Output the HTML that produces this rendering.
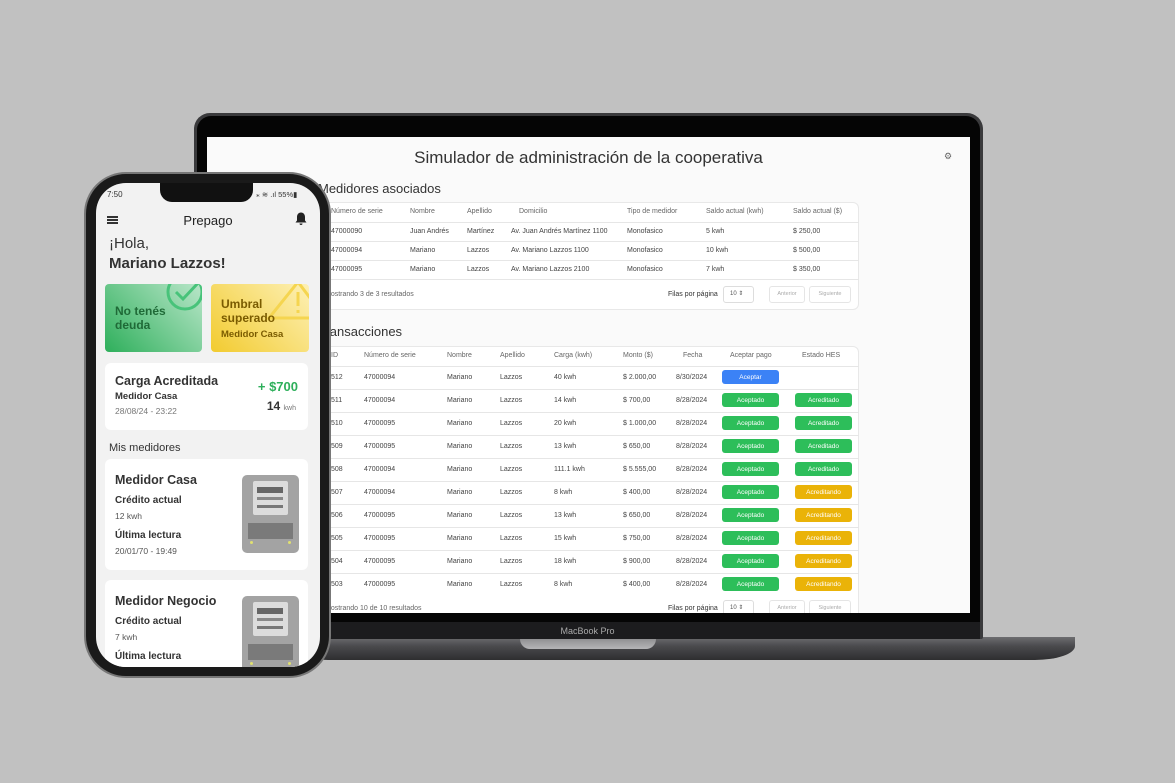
<!DOCTYPE html>
<html><head><meta charset="utf-8"><style>
*{margin:0;padding:0;box-sizing:border-box}
body{width:1175px;height:783px;background:#c1c1c1;position:relative;overflow:hidden;font-family:"Liberation Sans",sans-serif;color:#333}
.a{position:absolute}
.t{position:absolute;white-space:nowrap}
.sm{font-size:7px;color:#444}
.hd{font-size:7px;color:#666}
.btn{position:absolute;height:14px;border-radius:3px;font-size:6.5px;color:#fff;display:flex;align-items:center;justify-content:center}
.g{background:#2dbe5a}.y{background:#eab308}.b{background:#3b82f6}
.line{position:absolute;height:1px;background:#e6e6e6}
.card{position:absolute;background:#fff;border-radius:6px}
</style></head><body>
<div class="a" style="left:288px;top:637px;width:787px;height:23px;border-radius:0 0 40px 40px/0 0 14px 14px;background:linear-gradient(#6d6d70,#4a4a4d 40%,#2e2e30)"></div>
<div class="a" style="left:520px;top:637px;width:136px;height:12px;border-radius:0 0 10px 10px;background:linear-gradient(#8a8a8c,#b5b5b7)"></div>
<div class="a" style="left:194px;top:113px;width:789px;height:526px;border-radius:16px 16px 2px 2px;background:#3a3a3c"></div>
<div class="a" style="left:197px;top:116px;width:783px;height:521px;border-radius:14px 14px 0 0;background:#050505"></div>
<div class="a" style="left:197px;top:622px;width:783px;height:17px;background:#1c1c1e"></div>
<div class="t" style="left:0;width:1175px;text-align:center;top:626px;font-size:9px;color:#aaa">MacBook Pro</div>
<div class="a" style="left:207px;top:137px;width:763px;height:476px;background:#fafafa;overflow:hidden">
 <div class="t" style="left:0;width:763px;text-align:center;top:11px;font-size:17px;color:#333">Simulador de administración de la cooperativa</div>
 <div class="t" style="left:737px;top:14px;font-size:9px;color:#666">⚙</div>
 <div class="t" style="left:111px;top:44px;font-size:13px;color:#333">Medidores asociados</div>
 <div class="card" style="left:115px;top:65px;width:537px;height:108px;border:1px solid #e8e8e8"></div>
 <div class="line" style="left:115px;top:85px;width:537px"></div>
 <div class="line" style="left:115px;top:104px;width:537px"></div>
 <div class="line" style="left:115px;top:123px;width:537px"></div>
 <div class="line" style="left:115px;top:142px;width:537px"></div>
</div>
<div class="a" style="left:207px;top:137px;width:763px;height:476px;overflow:hidden">
 <div class="t hd" style="left:124px;top:71px">Número de serie</div><div class="t hd" style="left:203px;top:71px">Nombre</div><div class="t hd" style="left:260px;top:71px">Apellido</div><div class="t hd" style="left:312px;top:71px">Domicilio</div><div class="t hd" style="left:420px;top:71px">Tipo de medidor</div><div class="t hd" style="left:499px;top:71px">Saldo actual (kwh)</div><div class="t hd" style="left:586px;top:71px">Saldo actual ($)</div>
 <div class="t sm" style="left:124px;top:91px">47000090</div><div class="t sm" style="left:203px;top:91px">Juan Andrés</div><div class="t sm" style="left:260px;top:91px">Martínez</div><div class="t sm" style="left:304px;top:91px">Av. Juan Andrés Martínez 1100</div><div class="t sm" style="left:420px;top:91px">Monofasico</div><div class="t sm" style="left:499px;top:91px">5 kwh</div><div class="t sm" style="left:586px;top:91px">$ 250,00</div>
 <div class="t sm" style="left:124px;top:110px">47000094</div><div class="t sm" style="left:203px;top:110px">Mariano</div><div class="t sm" style="left:260px;top:110px">Lazzos</div><div class="t sm" style="left:304px;top:110px">Av. Mariano Lazzos 1100</div><div class="t sm" style="left:420px;top:110px">Monofasico</div><div class="t sm" style="left:499px;top:110px">10 kwh</div><div class="t sm" style="left:586px;top:110px">$ 500,00</div>
 <div class="t sm" style="left:124px;top:129px">47000095</div><div class="t sm" style="left:203px;top:129px">Mariano</div><div class="t sm" style="left:260px;top:129px">Lazzos</div><div class="t sm" style="left:304px;top:129px">Av. Mariano Lazzos 2100</div><div class="t sm" style="left:420px;top:129px">Monofasico</div><div class="t sm" style="left:499px;top:129px">7 kwh</div><div class="t sm" style="left:586px;top:129px">$ 350,00</div>
 <div class="t sm" style="left:118px;top:154px;color:#666">Mostrando 3 de 3 resultados</div>
 <div class="t sm" style="left:461px;top:154px;color:#333">Filas por página</div>
 <div class="a" style="left:516px;top:149px;width:31px;height:17px;border:1px solid #ddd;border-radius:3px;font-size:6px;line-height:15px;padding-left:6px;color:#555">10 ⇕</div>
 <div class="a" style="left:562px;top:149px;width:36px;height:17px;border:1px solid #e5e5e5;border-radius:3px;font-size:5.5px;line-height:15px;text-align:center;color:#aaa">Anterior</div>
 <div class="a" style="left:602px;top:149px;width:42px;height:17px;border:1px solid #e5e5e5;border-radius:3px;font-size:5.5px;line-height:15px;text-align:center;color:#aaa">Siguiente</div>
 <div class="t" style="left:111px;top:187px;font-size:13px;color:#333">Transacciones</div>
 <div class="card" style="left:115px;top:209px;width:537px;height:290px;border:1px solid #e8e8e8"></div>
 <div class="t hd" style="left:124px;top:215px">ID</div><div class="t hd" style="left:157px;top:215px">Número de serie</div><div class="t hd" style="left:240px;top:215px">Nombre</div><div class="t hd" style="left:293px;top:215px">Apellido</div><div class="t hd" style="left:347px;top:215px">Carga (kwh)</div><div class="t hd" style="left:416px;top:215px">Monto ($)</div><div class="t hd" style="left:476px;top:215px">Fecha</div><div class="t hd" style="left:523px;top:215px">Aceptar pago</div><div class="t hd" style="left:595px;top:215px">Estado HES</div>
 <div id="rows"></div>
 <div class="t sm" style="left:118px;top:468px;color:#666">Mostrando 10 de 10 resultados</div>
 <div class="t sm" style="left:461px;top:468px;color:#333">Filas por página</div>
 <div class="a" style="left:516px;top:463px;width:31px;height:17px;border:1px solid #ddd;border-radius:3px;font-size:6px;line-height:15px;padding-left:6px;color:#555">10 ⇕</div>
 <div class="a" style="left:562px;top:463px;width:36px;height:17px;border:1px solid #e5e5e5;border-radius:3px;font-size:5.5px;line-height:15px;text-align:center;color:#aaa">Anterior</div>
 <div class="a" style="left:602px;top:463px;width:42px;height:17px;border:1px solid #e5e5e5;border-radius:3px;font-size:5.5px;line-height:15px;text-align:center;color:#aaa">Siguiente</div>
</div>
<script>
var d=[["512","47000094","40 kwh","$ 2.000,00","8/30/2024",0,""],["511","47000094","14 kwh","$ 700,00","8/28/2024",1,"g"],["510","47000095","20 kwh","$ 1.000,00","8/28/2024",1,"g"],["509","47000095","13 kwh","$ 650,00","8/28/2024",1,"g"],["508","47000094","111.1 kwh","$ 5.555,00","8/28/2024",1,"g"],["507","47000094","8 kwh","$ 400,00","8/28/2024",1,"y"],["506","47000095","13 kwh","$ 650,00","8/28/2024",1,"y"],["505","47000095","15 kwh","$ 750,00","8/28/2024",1,"y"],["504","47000095","18 kwh","$ 900,00","8/28/2024",1,"y"],["503","47000095","8 kwh","$ 400,00","8/28/2024",1,"y"]];
var h="";d.forEach(function(r,i){var y=229+i*23;h+='<div class="line" style="left:115px;top:'+y+'px;width:537px"></div>';var ty=y+8;
h+='<div class="t sm" style="left:124px;top:'+ty+'px">'+r[0]+'</div><div class="t sm" style="left:157px;top:'+ty+'px">'+r[1]+'</div><div class="t sm" style="left:240px;top:'+ty+'px">Mariano</div><div class="t sm" style="left:293px;top:'+ty+'px">Lazzos</div><div class="t sm" style="left:347px;top:'+ty+'px">'+r[2]+'</div><div class="t sm" style="left:416px;top:'+ty+'px">'+r[3]+'</div><div class="t sm" style="left:469px;top:'+ty+'px">'+r[4]+'</div>';
h+=r[5]?'<div class="btn g" style="left:515px;top:'+(y+4)+'px;width:57px">Aceptado</div>':'<div class="btn b" style="left:515px;top:'+(y+4)+'px;width:57px">Aceptar</div>';
if(r[6])h+='<div class="btn '+r[6]+'" style="left:588px;top:'+(y+4)+'px;width:57px">'+(r[6]=="g"?"Acreditado":"Acreditando")+'</div>';});
document.getElementById("rows").innerHTML=h;
</script>
<div class="a" style="left:84px;top:172px;width:247px;height:506px;border-radius:42px;background:#1a1a1a;border:2px solid #777"></div>
<div class="a" style="left:96px;top:183px;width:224px;height:484px;border-radius:30px;background:#f2f2f2;overflow:hidden">
 <div class="a" style="left:64px;top:0;width:93px;height:19px;background:#111;border-radius:0 0 12px 12px"></div>
 <div class="t" style="left:11px;top:7px;font-size:8px;color:#333">7:50</div>
 <div class="t" style="left:160px;top:7px;font-size:7.5px;color:#333">⁎ ≋ .ıl 55%▮</div>
 <div class="a" style="left:11px;top:33px;width:11px;height:1.5px;background:#333;box-shadow:0 3px 0 #333,0 6px 0 #333"></div>
 <div class="t" style="left:0;width:224px;text-align:center;top:30px;font-size:13px;color:#222">Prepago</div>
 <svg class="a" style="left:199px;top:29px" width="12" height="13" viewBox="0 0 12 13"><path d="M6 0.5C3.5 0.5 2 2.5 2 5v3.5L0.5 10.5h11L10 8.5V5C10 2.5 8.5 0.5 6 0.5zM4.5 11.5a1.5 1.5 0 003 0z" fill="#222"/></svg>
 <div class="t" style="left:13px;top:52px;font-size:15px;color:#333">¡Hola,</div>
 <div class="t" style="left:13px;top:72px;font-size:15px;font-weight:bold;color:#333">Mariano Lazzos!</div>
 <div class="a" style="left:9px;top:101px;width:97px;height:68px;border-radius:4px;background:linear-gradient(45deg,#2eaf5b,#b9e6c9);overflow:hidden">
  <svg class="a" style="left:58px;top:-12px" width="44" height="44"><circle cx="22" cy="20" r="17" fill="none" stroke="#48c37a" stroke-width="3"/><path d="M13 20l7 7 16-17" fill="none" stroke="#48c37a" stroke-width="3"/></svg>
  <div class="t" style="left:10px;top:20px;font-size:12px;line-height:14px;font-weight:bold;color:#1f6a37">No tenés<br>deuda</div></div>
 <div class="a" style="left:115px;top:101px;width:98px;height:68px;border-radius:4px;background:linear-gradient(45deg,#f2cb2f,#fdf0b5);overflow:hidden">
  <svg class="a" style="left:52px;top:-6px" width="50" height="44"><path d="M35 4L6 40h56z" fill="none" stroke="#f5d550" stroke-width="3"/><path d="M35 14v14M35 32v3" stroke="#f5d550" stroke-width="3"/></svg>
  <div class="t" style="left:10px;top:13px;font-size:12px;line-height:14px;font-weight:bold;color:#7a5b00">Umbral<br>superado</div>
  <div class="t" style="left:10px;top:45px;font-size:9.5px;font-weight:bold;color:#7a5b00">Medidor Casa</div></div>
 <div class="card" style="left:9px;top:180px;width:203px;height:67px">
  <div class="t" style="left:10px;top:11px;font-size:12.5px;font-weight:bold;color:#333">Carga Acreditada</div>
  <div class="t" style="left:10px;top:28px;font-size:9.5px;font-weight:bold;color:#333">Medidor Casa</div>
  <div class="t" style="left:10px;top:43px;font-size:8.5px;color:#777">28/08/24 - 23:22</div>
  <div class="t" style="right:10px;top:16px;font-size:13px;font-weight:bold;color:#2eaf5b">+ $700</div>
  <div class="t" style="right:12px;top:36px;font-size:12px;font-weight:bold;color:#333">14 <span style="font-size:7px;font-weight:normal;color:#777">kwh</span></div></div>
 <div class="t" style="left:13px;top:259px;font-size:11px;color:#333">Mis medidores</div>
 <div class="card" style="left:9px;top:276px;width:203px;height:111px">
  <div class="t" style="left:10px;top:14px;font-size:12.5px;font-weight:bold;color:#333">Medidor Casa</div>
  <div class="t" style="left:10px;top:36px;font-size:10px;font-weight:bold;color:#333">Crédito actual</div>
  <div class="t" style="left:10px;top:52px;font-size:8.5px;color:#555">12 kwh</div>
  <div class="t" style="left:10px;top:71px;font-size:10px;font-weight:bold;color:#333">Última lectura</div>
  <div class="t" style="left:10px;top:87px;font-size:8.5px;color:#555">20/01/70 - 19:49</div>
  <div class="a" style="left:137px;top:16px;width:57px;height:78px;border-radius:5px;background:#a3a3a3"><div class="a" style="left:11px;top:6px;width:35px;height:34px;background:#dcdcdc;border-radius:2px"></div><div class="a" style="left:15px;top:12px;width:26px;height:6px;background:#666"></div><div class="a" style="left:15px;top:22px;width:26px;height:3px;background:#888;box-shadow:0 8px 0 #777"></div><div class="a" style="left:6px;top:48px;width:45px;height:16px;background:#7a7a7a"></div><div class="a" style="left:8px;top:66px;width:3px;height:3px;border-radius:50%;background:#e0e070;box-shadow:38px 0 0 #e0e070"></div></div></div>
 <div class="card" style="left:9px;top:397px;width:203px;height:111px">
  <div class="t" style="left:10px;top:14px;font-size:12.5px;font-weight:bold;color:#333">Medidor Negocio</div>
  <div class="t" style="left:10px;top:36px;font-size:10px;font-weight:bold;color:#333">Crédito actual</div>
  <div class="t" style="left:10px;top:52px;font-size:8.5px;color:#555">7 kwh</div>
  <div class="t" style="left:10px;top:71px;font-size:10px;font-weight:bold;color:#333">Última lectura</div>
  <div class="a" style="left:137px;top:16px;width:57px;height:78px;border-radius:5px;background:#a3a3a3"><div class="a" style="left:11px;top:6px;width:35px;height:34px;background:#dcdcdc;border-radius:2px"></div><div class="a" style="left:15px;top:12px;width:26px;height:6px;background:#666"></div><div class="a" style="left:15px;top:22px;width:26px;height:3px;background:#888;box-shadow:0 8px 0 #777"></div><div class="a" style="left:6px;top:48px;width:45px;height:16px;background:#7a7a7a"></div><div class="a" style="left:8px;top:66px;width:3px;height:3px;border-radius:50%;background:#e0e070;box-shadow:38px 0 0 #e0e070"></div></div></div>
</div>
</body></html>
